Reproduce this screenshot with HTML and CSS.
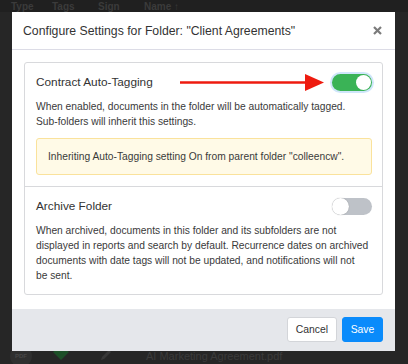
FILE: index.html
```html
<!DOCTYPE html>
<html>
  <head>
    <meta charset="utf-8">
    <title>Configure Settings for Folder</title>
    <link rel="stylesheet" href="styles.css">
  </head>
  <body>
    <div class="page">
      <div class="list-head">
        <span class="col col-type">Type</span>
        <span class="col col-tags">Tags</span>
        <span class="col col-sign">Sign</span>
        <span class="col col-name">Name &#8593;</span>
      </div>
      <div class="list-rows"></div>
      <div class="list-row">
        <span class="col col-type"><span class="pdf">PDF</span></span>
        <span class="col col-tags"><svg width="16" height="10" viewBox="0 0 16 10"><path d="M0 2 L3 0 H13 L16 2 L8 10 Z" fill="#1d4f28"/></svg></span>
        <span class="col col-sign"><svg width="12" height="12" viewBox="0 0 12 12"><path d="M1 11 L2 8 L9 1 L11 3 L4 10 Z" fill="#383838"/></svg></span>
        <span class="col col-name">AI Marketing Agreement.pdf</span>
      </div>
    </div>

    <div class="modal">
      <div class="modal-header">
        <h3 class="modal-title">Configure Settings for Folder: "Client Agreements"</h3>
        <svg class="close" width="9" height="9" viewBox="0 0 9 9">
          <path d="M1 1 L8 8 M8 1 L1 8" stroke="#7b7b7b" stroke-width="2.2"/>
        </svg>
      </div>
      <div class="modal-body">
        <div class="card">
          <div class="section">
            <div class="section-head">
              <span class="section-title">Contract Auto-Tagging</span>
              <span class="toggle on focus"><span class="knob"></span></span>
            </div>
            <!-- annotation arrow pointing at the toggle -->
            <svg class="arrow" width="144" height="17" viewBox="0 0 144 17">
              <line x1="0" y1="8.5" x2="128" y2="8.5" stroke="#ee1b0f" stroke-width="2.4"/>
              <path d="M125 0 L144 8.5 L125 17 Z" fill="#ee1b0f"/>
            </svg>
            <p class="desc">When enabled, documents in the folder will be automatically tagged. <span class="nowrap">Sub-folders</span> will inherit this settings.</p>
            <div class="notice">Inheriting Auto-Tagging setting On from parent folder "colleencw".</div>
          </div>
          <div class="section">
            <div class="section-head">
              <span class="section-title">Archive Folder</span>
              <span class="toggle"><span class="knob"></span></span>
            </div>
            <p class="desc">When archived, documents in this folder and its subfolders are not displayed in reports and search by default. Recurrence dates on archived documents with date tags will not be updated, and notifications will not <span class="nowrap">be sent.</span></p>
          </div>
        </div>
      </div>
      <div class="modal-footer">
        <button class="btn btn-default">Cancel</button>
        <button class="btn btn-primary">Save</button>
      </div>
    </div>
  </body>
</html>
```
FILE: styles.css
```css
body {
  margin: 0;
  background-color: #262626;
  font-family: 'Liberation Sans', Arial, sans-serif;
}

.page {
  height: 364px;
  display: flex;
  flex-direction: column;
  overflow: hidden;
}

.list-head {
  display: flex;
  align-items: center;
  height: 12px;
  background-color: #202020;
  font-size: 10px;
  font-weight: bold;
  color: #3b3b3b;
}

.list-rows {
  flex: 1;
}

.list-row {
  display: flex;
  align-items: center;
  height: 22px;
  margin-bottom: -3px;
  font-size: 11px;
  color: #3b3b3b;
}

.col-type { width: 52px; padding-left: 11px; box-sizing: border-box; }
.col-tags { width: 46px; }
.col-sign { width: 46px; }

.list-row .col-type { padding-left: 10px; }
.list-row .col-tags { padding-left: 1px; }
.list-row .col-sign { padding-left: 1px; }

.pdf {
  display: inline-flex;
  align-items: center;
  justify-content: center;
  width: 22px;
  height: 22px;
  border-radius: 50%;
  background-color: #2f2f2f;
  font-size: 6px;
  font-weight: bold;
  color: #474747;
}

.modal {
  position: fixed;
  top: 12px;
  left: 12px;
  width: 383px;
  height: 339px;
  background-color: white;
  display: flex;
  flex-direction: column;
}

.modal-header {
  display: flex;
  align-items: center;
  justify-content: space-between;
  height: 37px;
  padding: 0 13px 0 11px;
  border-bottom: 1px solid #dcdce6;
}

.modal-title {
  margin: 0;
  font-size: 12.25px;
  font-weight: normal;
  color: #333;
}

.modal-body {
  padding: 12px;
}

.card {
  border: 1px solid #d8d9dc;
  border-radius: 3px;
}

.section {
  position: relative;
  padding: 10px 10px 11px 11px;
}

.section + .section {
  border-top: 1px solid #d8d9dc;
}

.section-head {
  display: flex;
  align-items: center;
  justify-content: space-between;
  height: 18px;
}

.section-title {
  font-size: 11.8px;
  color: #333;
}

.toggle {
  position: relative;
  width: 40px;
  height: 17px;
  border-radius: 9px;
  background-color: #bec2c8;
}

.toggle .knob {
  position: absolute;
  top: 0;
  left: 0;
  width: 17px;
  height: 17px;
  border-radius: 50%;
  background-color: white;
  box-shadow: 0 0 1px rgba(0, 0, 0, 0.35);
}

.toggle.on {
  background-color: #3ab356;
}

.toggle.on .knob {
  left: auto;
  right: 1px;
  top: 1px;
  width: 15px;
  height: 15px;
  box-shadow: none;
}

.toggle.focus {
  box-shadow: 0 0 0 2px #cfe6fa;
}

.arrow {
  position: absolute;
  left: 155px;
  top: 11px;
}

.desc {
  margin: 9px 0 0 0;
  padding-right: 1.5px;
  font-size: 10.25px;
  line-height: 14.7px;
  color: #3a3a3a;
}

.nowrap {
  white-space: nowrap;
}

.notice {
  margin-top: 9px;
  padding: 10px 11px;
  background-color: #fffae7;
  border: 1px solid #fae29c;
  border-radius: 3px;
  font-size: 10.25px;
  line-height: 15px;
  color: #3a3a3a;
}

.modal-footer {
  margin-top: auto;
  display: flex;
  justify-content: flex-end;
  gap: 5px;
  padding: 8px 12px 9px 12px;
  background-color: #e5e7eb;
}

.btn {
  height: 25px;
  border-radius: 3px;
  font-family: 'Liberation Sans', Arial, sans-serif;
  font-size: 10.4px;
  padding: 0;
  cursor: pointer;
}

.btn-default {
  background-color: white;
  border: 1px solid #d3d5d9;
  color: #333;
  width: 50px;
}

.btn-primary {
  background-color: #0a8bfb;
  border: 1px solid #0a8bfb;
  color: white;
  width: 41px;
}
```
